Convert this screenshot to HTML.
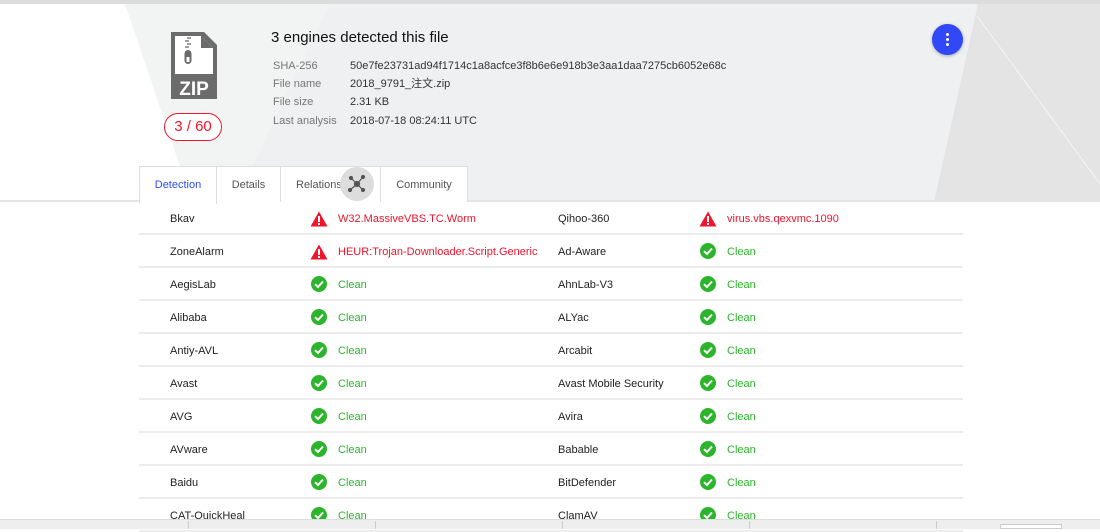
<!DOCTYPE html>
<html><head><meta charset="utf-8"><style>
*{margin:0;padding:0;box-sizing:border-box}
body{width:1100px;height:529px;overflow:hidden;background:#fff;font-family:"Liberation Sans","Noto Sans CJK SC",sans-serif;position:relative;color:#222}
.abs{position:absolute}
.hdr{left:0;top:0;width:1100px;height:202px;background:#eef0f1;border-top:4px solid #dcdcdc;border-bottom:2px solid #e4e4e4}
.lbl{font-size:11px;color:#777;line-height:14px}
.val{font-size:11px;color:#333;line-height:14px;height:14px}
.tab{top:166px;height:37px;background:#fff;border:1px solid #ddd;border-bottom:none;font-size:11px;color:#555;text-align:center;line-height:36px}
.row{left:139px;width:824px;height:33px;border-bottom:2px solid #ececec;background:#fff;font-size:11px}
.row span{position:absolute;top:10px;line-height:14px}
.red{color:#f0142d}.grn{color:#2cb52c}
</style></head><body>
<div class="abs hdr"></div>
<svg class="abs" style="left:0;top:4px" width="1100" height="198">
<polygon points="0,0 125,0 192,162 192,198 0,198" fill="#fff"/>
<polygon points="125,0 330,0 235,198 192,198" fill="#f2f3f3"/>
<polygon points="978,0 1100,0 1100,198 934,198" fill="#e4e4e4"/>
<line x1="977" y1="12" x2="1100" y2="180" stroke="#f4f4f4" stroke-width="1"/>
</svg>
<div class="abs" style="left:0;top:200px;width:139px;height:2px;background:#e4e4e4"></div>
<svg class="abs" style="left:168px;top:31px" width="50" height="70" viewBox="0 0 50 70">
<path d="M3 1 H36 L49 14 V68 H3 Z" fill="#6b6b6b"/>
<path d="M7 5 H33 L45 17 V43 H7 Z" fill="#fff"/>
<path d="M33 5 V17 H45 Z" fill="#6b6b6b"/>
<g stroke="#6b6b6b" stroke-width="1.3"><line x1="19" y1="7" x2="23" y2="7"/><line x1="17" y1="10" x2="21" y2="10"/><line x1="19" y1="13" x2="23" y2="13"/><line x1="17" y1="16" x2="21" y2="16"/></g>
<rect x="16.5" y="19" width="7" height="14" rx="3.5" fill="#6b6b6b"/><rect x="18.5" y="26" width="3" height="5" fill="#fff"/>
<text x="26" y="64" text-anchor="middle" font-family="Liberation Sans" font-weight="bold" font-size="19" fill="#fff">ZIP</text>
</svg>
<div class="abs" style="left:164px;top:113px;width:58px;height:28px;border:1px solid #f0142d;border-radius:14px;background:#fff;color:#f0142d;font-size:15px;text-align:center;line-height:26px">3 / 60</div>
<div class="abs" style="left:271px;top:29px;font-size:15px;color:#111;line-height:18px">3 engines detected this file</div>
<div class="abs lbl" style="left:273px;top:59px">SHA-256</div>
<div class="abs lbl" style="left:273px;top:77px">File name</div>
<div class="abs lbl" style="left:273px;top:95px">File size</div>
<div class="abs lbl" style="left:273px;top:114px">Last analysis</div>
<div class="abs val" style="left:350px;top:59px">50e7fe23731ad94f1714c1a8acfce3f8b6e6e918b3e3aa1daa7275cb6052e68c</div>
<div class="abs val" style="left:350px;top:77px">2018_9791_注文.zip</div>
<div class="abs val" style="left:350px;top:95px">2.31 KB</div>
<div class="abs val" style="left:350px;top:114px">2018-07-18 08:24:11 UTC</div>
<div class="abs" style="left:932px;top:24px;width:31px;height:31px;border-radius:50%;background:#3048f6;box-shadow:0 1px 3px rgba(0,0,0,.3)">
<div class="abs" style="left:14px;top:9px;width:3px;height:3px;border-radius:50%;background:#fff"></div>
<div class="abs" style="left:14px;top:14px;width:3px;height:3px;border-radius:50%;background:#fff"></div>
<div class="abs" style="left:14px;top:19px;width:3px;height:3px;border-radius:50%;background:#fff"></div></div>
<div class="abs tab" style="left:139px;width:78px;color:#2d4ff0;height:38px;z-index:2">Detection</div>
<div class="abs tab" style="left:216px;width:65px">Details</div>
<div class="abs tab" style="left:280px;width:101px;text-align:left;padding-left:15px">Relations</div>
<div class="abs" style="left:340px;top:167px;width:34px;height:34px;border-radius:50%;background:#ddd"></div>
<svg class="abs" style="left:345px;top:172px" width="24" height="24" viewBox="0 0 24 24" stroke="#555" stroke-width="1.2" fill="#555">
<line x1="6" y1="6" x2="12" y2="12"/><line x1="18" y1="5" x2="12" y2="12"/><line x1="5" y1="18" x2="12" y2="12"/><line x1="18" y1="18" x2="12" y2="12"/>
<circle cx="12" cy="12" r="2.5"/><circle cx="6" cy="6" r="1.5"/><circle cx="18" cy="5" r="1.5"/><circle cx="5" cy="18" r="1.5"/><circle cx="18" cy="18" r="1.5"/></svg>
<div class="abs tab" style="left:380px;width:88px">Community</div>
<div class="abs" style="left:139px;top:202px;width:824px;height:317px;border-left:1px solid #e4e4e4;border-right:1px solid #e4e4e4"></div>
<div id="rows"></div>
<div class="abs" style="left:0;top:519px;width:1100px;height:10px;background:#eeeeee;border-top:1px solid #ddd"></div>
<div class="abs" style="left:188px;top:521px;width:1px;height:8px;background:#ccc"></div>
<div class="abs" style="left:375px;top:521px;width:1px;height:8px;background:#ccc"></div>
<div class="abs" style="left:562px;top:521px;width:1px;height:8px;background:#ccc"></div>
<div class="abs" style="left:749px;top:521px;width:1px;height:8px;background:#ccc"></div>
<div class="abs" style="left:936px;top:521px;width:1px;height:8px;background:#ccc"></div>
<div class="abs" style="left:1000px;top:524px;width:62px;height:5px;background:#fff;border:1px solid #ccc"></div>
<script>
var d=[["Bkav","W32.MassiveVBS.TC.Worm","Qihoo-360","virus.vbs.qexvmc.1090"],["ZoneAlarm","HEUR:Trojan-Downloader.Script.Generic","Ad-Aware",""],["AegisLab","","AhnLab-V3",""],["Alibaba","","ALYac",""],["Antiy-AVL","","Arcabit",""],["Avast","","Avast Mobile Security",""],["AVG","","Avira",""],["AVware","","Babable",""],["Baidu","","BitDefender",""],["CAT-QuickHeal","","ClamAV",""]];
var warn='<svg width="18" height="16" viewBox="0 0 18 16"><path d="M9 0.5L17.5 15.5H0.5Z" fill="#f0142d"/><rect x="8" y="5" width="2" height="6" fill="#fff"/><rect x="8" y="12" width="2" height="2" fill="#fff"/></svg>';
var ok='<svg width="16" height="16" viewBox="0 0 16 16"><circle cx="8" cy="8" r="8" fill="#2cb52c"/><path d="M4 8.2L7 11L12 5.5" stroke="#fff" stroke-width="2" fill="none"/></svg>';
var h='';
d.forEach(function(r,i){var t=202+i*33;h+='<div class="abs row" style="top:'+t+'px"><span style="left:31px;top:10px">'+r[0]+'</span>';
h+=r[1]?'<span style="left:171px;top:9px">'+warn+'</span><span class="red" style="left:199px">'+r[1]+'</span>':'<span style="left:172px;top:8px">'+ok+'</span><span class="grn" style="left:199px">Clean</span>';
h+='<span style="left:419px">'+r[2]+'</span>';
h+=r[3]?'<span style="left:560px;top:9px">'+warn+'</span><span class="red" style="left:588px">'+r[3]+'</span>':'<span style="left:561px;top:8px">'+ok+'</span><span class="grn" style="left:588px">Clean</span>';
h+='</div>';});
document.getElementById('rows').innerHTML=h;
</script>
</body></html>
